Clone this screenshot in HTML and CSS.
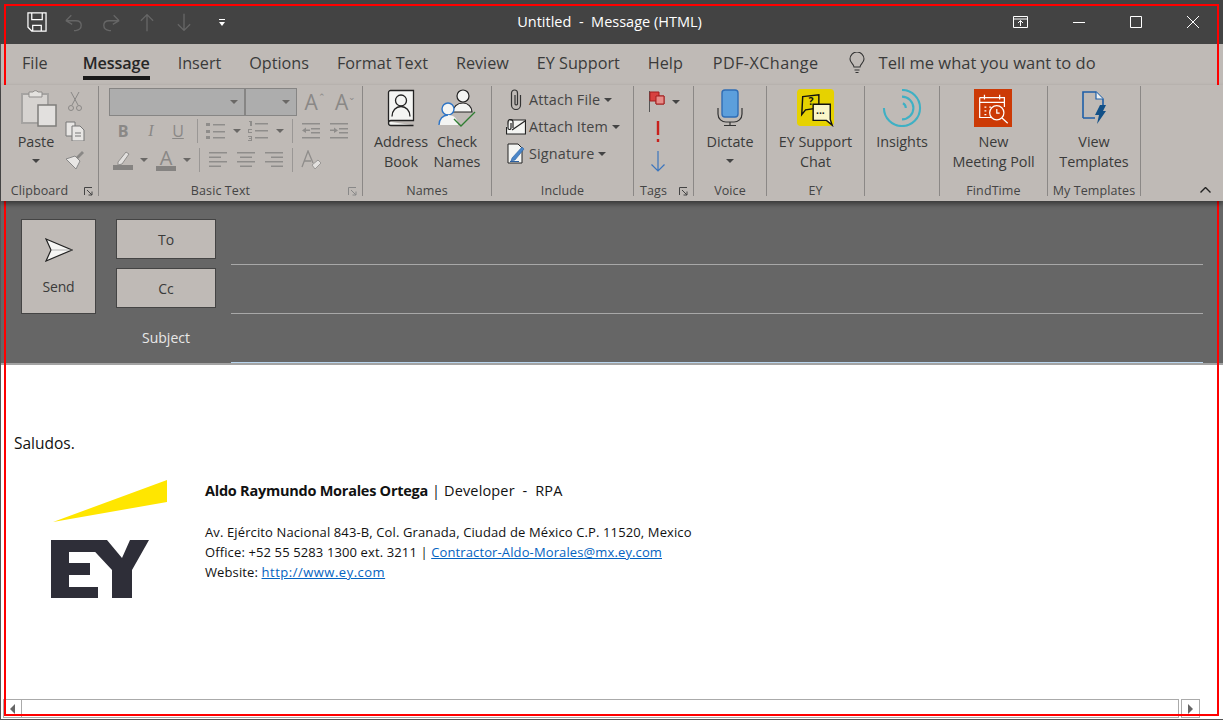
FILE: index.html
```html
<!DOCTYPE html>
<html lang="en">
<head>
<meta charset="UTF-8">
<title>Untitled - Message (HTML)</title>
<link rel="stylesheet" href="styles.css">
</head>
<body>
<div class="window">

  <!-- title bar -->
  <div class="titlebar">
    <div class="qat">
      <svg class="qat-save" width="20" height="20" viewBox="0 0 21 21" fill="none" stroke="#fff" stroke-width="1.3"><path d="M1 1h19v19H5l-4-4z"/><path d="M5 1v7h11V1"/><path d="M6 20v-6h9v6"/></svg>
      <svg class="qat-undo" width="18" height="19" viewBox="0 0 20 20" fill="none" stroke="#666" stroke-width="1.5"><path d="M1 8l6-6M1 8l7 4M1 8h11c8 0 8 10 0 11l-2 0"/></svg>
      <svg class="qat-redo" width="18" height="19" viewBox="0 0 20 20" fill="none" stroke="#666" stroke-width="1.5"><path d="M19 8l-6-6M19 8l-7 4M19 8H8c-8 0-8 10 0 11l2 0"/></svg>
      <svg class="qat-up" width="14" height="19" viewBox="0 0 16 20" fill="none" stroke="#666" stroke-width="1.5"><path d="M8 20V1M1 8l7-7 7 7"/></svg>
      <svg class="qat-down" width="14" height="19" viewBox="0 0 16 20" fill="none" stroke="#666" stroke-width="1.5"><path d="M8 0v19M1 12l7 7 7-7"/></svg>
      <svg class="qat-more" width="6" height="7" viewBox="0 0 6 7" fill="#fff"><path d="M0 0h6v1H0zM0 3h6L3 7z"/></svg>
    </div>
    <div class="title">Untitled&nbsp; -&nbsp; Message (HTML)</div>
    <div class="winctl">
      <svg width="16" height="12" viewBox="0 0 16 12" fill="none" stroke="#fff"><path d="M.5.5h14v11H.5zM.5 3h14M7.5 10V4.500M5 7l2.500-2.500L10 7"/></svg>
      <svg class="ctl-min" width="12" height="1" viewBox="0 0 12 1"><path d="M0 0h12v1H0z" fill="#fff"/></svg>
      <svg class="ctl-max" width="12" height="12" viewBox="0 0 12 12" fill="none" stroke="#fff"><path d="M.5.5h11v11H.5z"/></svg>
      <svg class="ctl-close" width="12" height="12" viewBox="0 0 12 12" fill="none" stroke="#fff"><path d="M0 0l12 12M12 0L0 12"/></svg>
    </div>
  </div>

  <!-- tabs -->
  <div class="tabs">
    <span class="tab">File</span>
    <span class="tab tab-active">Message</span>
    <span class="tab">Insert</span>
    <span class="tab">Options</span>
    <span class="tab">Format Text</span>
    <span class="tab">Review</span>
    <span class="tab">EY Support</span>
    <span class="tab">Help</span>
    <span class="tab tab-pdf">PDF-XChange</span>
    <span class="tell">
      <svg width="16" height="22" viewBox="0 0 16 22" fill="none" stroke="#333" stroke-width="1.100"><path d="M5 15c0-3-4-4-4-8a7 7 0 0 1 14 0c0 4-4 5-4 8z"/><path d="M5.500 18h5M6.500 20.500h3"/></svg>
      Tell me what you want to do
    </span>
  </div>

  <!-- ribbon -->
  <div class="ribbon">

    <div class="group group-clipboard">
      <div class="group-body clip-body">
        <div class="big big-paste">
          <svg class="big-icon paste-icon" width="36" height="38" viewBox="0 0 36 38"><path d="M1 5h26v29H1z" fill="#d6d3d0" stroke="#a5a3a1" stroke-width="2"/><path d="M8 3h4a3 3 0 0 1 5 0h4v5H8z" fill="#e4e2df" stroke="#8f8d8b"/><path d="M17 16h18v21H17z" fill="#e2e0de" stroke="#7f7d7b" stroke-width="1.500"/></svg>
          <span>Paste</span>
          <i class="caret caret-big"></i>
        </div>
        <div class="clip-small">
          <svg width="14" height="20" viewBox="0 0 14 20" fill="none" stroke="#8a8886"><path d="M3 0l7 13M11 0L4 13"/><circle cx="3" cy="16" r="2.500"/><circle cx="11" cy="16" r="2.500"/></svg>
          <svg width="20" height="20" viewBox="0 0 20 20" fill="#e8e6e4" stroke="#777"><path d="M1 1h9v14H1z"/><path d="M7 5h8l4 4v11H7z"/><path d="M10 12h6M10 15h6" /></svg>
          <svg width="20" height="20" viewBox="0 0 20 20"><path d="M1 9l9-3 5 5-4 8z" fill="#e8e6e4" stroke="#888"/><path d="M11 7l6-6 2 2-6 6z" fill="#8a8886"/></svg>
        </div>
      </div>
      <div class="group-label label-left">Clipboard<svg class="launcher" width="9" height="9" viewBox="0 0 9 9" fill="none" stroke="#444"><path d="M.5 8V.5H8M3 3l5 5M8 4.500V8H4.500"/></svg></div>
    </div>

    <div class="group group-text">
      <div class="text-rows">
        <div class="text-row text-row1">
          <div class="combo"><i class="caret"></i></div>
          <div class="combo"><i class="caret"></i></div>
          <span class="tool tool-size">A<sup>&#8963;</sup></span>
          <span class="tool tool-size">A<sup>&#8964;</sup></span>
        </div>
        <div class="text-row text-row2">
          <b class="tool">B</b>
          <em class="tool">I</em>
          <u class="tool">U</u>
          <span class="tool"><i class="vsep"></i></span>
          <span class="tool"><svg width="20" height="18" viewBox="0 0 20 18" fill="#8f8d8b"><path d="M0 1h4v3H0zM0 8h4v3H0zM0 14h4v3H0zM7 2h12v1.500H7zM7 9h12v1.500H7zM7 15h12v1.500H7z"/></svg></span>
          <span class="tool"><i class="caret"></i></span>
          <span class="tool"><svg width="20" height="20" viewBox="0 0 20 20" fill="#8f8d8b"><path d="M7 2h13v1.500H7zM7 9h13v1.500H7zM7 16h13v1.500H7zM1 0h3v5H2V1H1zM0 8h4v1H1v2h3v1H0zM0 15h4v5H0v-1h3v-1H1v-1h2v-1H0z"/></svg></span>
          <span class="tool"><i class="caret"></i></span>
          <span class="tool"><i class="vsep"></i></span>
          <span class="tool"><svg width="18" height="16" viewBox="0 0 18 16" fill="#8f8d8b"><path d="M0 0h18v1.500H0zM9 5h9v1.500H9zM9 9h9v1.500H9zM0 14h18v1.500H0zM0 7.500l4-3v2h4v1.500H4v2z"/></svg></span>
          <span class="tool"><svg width="18" height="16" viewBox="0 0 18 16" fill="#8f8d8b"><path d="M0 0h18v1.500H0zM9 5h9v1.500H9zM9 9h9v1.500H9zM0 14h18v1.500H0zM8 7.500l-4-3v2H0v1.500h4v2z"/></svg></span>
        </div>
        <div class="text-row text-row3">
          <span class="tool"><svg width="20" height="20" viewBox="0 0 20 20"><path d="M5 12L13 2l3 2-7 10-4 1z" fill="#e2e0de" stroke="#8f8d8b"/><path d="M0 15h20v5H0z" fill="#858381"/></svg></span>
          <span class="tool"><i class="caret"></i></span>
          <span class="tool tool-color">A</span>
          <span class="tool"><i class="caret"></i></span>
          <span class="tool"><i class="vsep"></i></span>
          <span class="tool"><svg width="18" height="16" viewBox="0 0 18 16" fill="#8f8d8b"><path d="M0 0h18v1.500H0zM0 4.500h12V6H0zM0 9h18v1.500H0zM0 13.500h12V15H0z"/></svg></span>
          <span class="tool"><svg width="18" height="16" viewBox="0 0 18 16" fill="#8f8d8b"><path d="M0 0h18v1.500H0zM3 4.500h12V6H3zM0 9h18v1.500H0zM3 13.500h12V15H3z"/></svg></span>
          <span class="tool"><svg width="18" height="16" viewBox="0 0 18 16" fill="#8f8d8b"><path d="M0 0h18v1.500H0zM6 4.500h12V6H6zM0 9h18v1.500H0zM6 13.500h12V15H6z"/></svg></span>
          <span class="tool"><i class="vsep"></i></span>
          <span class="tool"><svg width="21" height="20" viewBox="0 0 21 20" fill="none"><path d="M1 17L7 1l5 12M3 11h7" stroke="#8f8d8b" stroke-width="1.300"/><path d="M11 15l6-5 3 3-6 6z" fill="#e2e0de" stroke="#9a9896"/></svg></span>
        </div>
      </div>
      <div class="group-label label-left">Basic Text<svg class="launcher launcher-off" width="9" height="9" viewBox="0 0 9 9" fill="none" stroke="#888"><path d="M.5 8V.5H8M3 3l5 5M8 4.500V8H4.500"/></svg></div>
    </div>

    <div class="group group-names">
      <div class="group-body names-body">
        <div class="big big-address">
          <svg class="big-icon" width="28" height="37" viewBox="0 0 28 37"><path d="M1.500 32V3a2 2 0 0 1 2-2h23v30H4a2.500 2.500 0 0 0 0 5h22.500" fill="#f4f5f3" stroke="#222" stroke-width="1.300"/><circle cx="14" cy="11" r="5.500" fill="none" stroke="#222" stroke-width="1.300"/><path d="M5 27c0-6 4-10 9-10s9 4 9 10" fill="none" stroke="#222" stroke-width="1.300"/></svg>
          <span>Address<br>Book</span>
        </div>
        <div class="big big-check">
          <svg class="big-icon" width="38" height="38" viewBox="0 0 38 38"><circle cx="25" cy="7" r="6" fill="#f4f5f3" stroke="#222" stroke-width="1.200"/><path d="M15 23c0-5 4-9 10-9 5 0 9 4 9 9z" fill="#f4f5f3" stroke="#222" stroke-width="1.200"/><path d="M18 23h18l-8 0z" fill="#c7c6c3"/><circle cx="10" cy="20" r="6" fill="#f4f5f3" stroke="#2e75c6" stroke-width="1.400"/><path d="M1 36c0-6 4-10 9-10 6 0 10 4 10 10z" fill="#f4f5f3"/><path d="M1 36c0-6 4-10 9-10" fill="none" stroke="#2e75c6" stroke-width="1.400"/><path d="M16 30l7 7L37 23" fill="none" stroke="#2f7d32" stroke-width="1.400"/></svg>
          <span>Check<br>Names</span>
        </div>
      </div>
      <div class="group-label">Names</div>
    </div>

    <div class="group group-include">
      <div class="include-rows">
        <div class="inc-row">
          <span class="inc-icon"><svg width="12" height="21" viewBox="0 0 12 21" fill="none" stroke="#333" stroke-width="1.200"><path d="M10.500 6v10a4.500 4.500 0 0 1-9 0V4a3 3 0 0 1 6 0v11a1.300 1.300 0 0 1-2.500 0V6"/></svg></span>
          Attach File <i class="caret caret-dark"></i>
        </div>
        <div class="inc-row">
          <span class="inc-icon"><svg width="20" height="16" viewBox="0 0 20 16" fill="none" stroke="#222" stroke-width="1.200"><path d="M4 1h15.500v14H.5V8" fill="#f4f5f3"/><path d="M6 11L19 2"/><path d="M7 9V3a2.500 2.500 0 0 0-5 0v6a1.500 1.500 0 0 0 3 0V4"/></svg></span>
          Attach Item <i class="caret caret-dark"></i>
        </div>
        <div class="inc-row">
          <span class="inc-icon"><svg width="18" height="21" viewBox="0 0 18 21"><path d="M1 1h10l4 4v15H1z" fill="#f4f5f3" stroke="#222"/><path d="M5 15L15 4l2 2L8 17l-4 1z" fill="#4a86c8" stroke="#2b5fa0" stroke-width=".6"/><path d="M3 18.500h9" stroke="#2b5fa0"/></svg></span>
          Signature <i class="caret caret-dark"></i>
        </div>
      </div>
      <div class="group-label">Include</div>
    </div>

    <div class="group group-tags">
      <div class="tags-col">
        <div class="tag-flag">
          <svg width="16" height="21" viewBox="0 0 16 21"><path d="M.5 0v21" stroke="#555"/><path d="M1 1h9v4h5v8H7V10H1z" fill="#d8413f" stroke="#a31f1f"/><path d="M7 5h8v8H7z" fill="#e78c88" stroke="#a31f1f"/></svg>
          <i class="caret caret-dark"></i>
        </div>
        <svg width="4" height="21" viewBox="0 0 4 21" fill="#c8211c"><path d="M.8 0h2.400v14H.8zM.8 18h2.400v3H.8z"/></svg>
        <svg width="14" height="21" viewBox="0 0 14 21" fill="none" stroke="#3b75bd" stroke-width="1.200"><path d="M7 0v20M.5 13.500L7 20l6.500-6.500"/></svg>
      </div>
      <div class="group-label label-left">Tags<svg class="launcher" width="9" height="9" viewBox="0 0 9 9" fill="none" stroke="#444"><path d="M.5 8V.5H8M3 3l5 5M8 4.500V8H4.500"/></svg></div>
    </div>

    <div class="group group-voice">
      <div class="group-body">
        <div class="big">
          <svg class="big-icon" width="26" height="38" viewBox="0 0 26 38"><rect x="5" y="1" width="16" height="27" rx="3" fill="#5c9fdc" stroke="#2f6db5" stroke-width="1.400"/><path d="M1 18v6c0 5 4 8 8 8h8c4 0 8-3 8-8v-6" fill="none" stroke="#333" stroke-width="1.200" transform="translate(0 1)"/><path d="M13 33v3M7 36.500h12" stroke="#333" stroke-width="1.200"/></svg>
          <span>Dictate</span>
          <i class="caret caret-big"></i>
        </div>
      </div>
      <div class="group-label">Voice</div>
    </div>

    <div class="group group-ey">
      <div class="group-body">
        <div class="big">
          <svg class="big-icon" width="40" height="40" viewBox="0 0 40 40"><rect width="39" height="39" rx="4" fill="#e6d200"/><path d="M6 8l17-2 0 14-14 2-4 5z" fill="#e6d200" stroke="#111" stroke-width="1.500"/><path d="M17 16h18v16l2 6-6-5H17z" fill="#faf6c8" stroke="#111" stroke-width="1.500"/><text x="12" y="17" class="chat-q">?</text><text x="20" y="26" class="chat-q">...</text></svg>
          <span>EY Support<br>Chat</span>
        </div>
      </div>
      <div class="group-label">EY</div>
    </div>

    <div class="group group-insights">
      <div class="group-body">
        <div class="big">
          <svg class="big-icon" width="40" height="40" viewBox="0 0 40 40" fill="none" stroke="#3fb0c4" stroke-width="2.200"><path d="M20 1a19 19 0 1 1-19 19"/><path d="M20 8a12 12 0 0 1 0 24"/><path d="M21 15a6 6 0 0 1 3 5"/></svg>
          <span>Insights</span>
        </div>
      </div>
      <div class="group-label"></div>
    </div>

    <div class="group group-find">
      <div class="group-body">
        <div class="big">
          <svg class="big-icon" width="40" height="40" viewBox="0 0 40 40"><rect width="40" height="40" fill="#cc3a06"/><path d="M6 9h26v10M6 9v21h12M6 14h26M11 6v5M27 6v5M11 19h2M11 23h2M11 27h2M16 19h2" fill="none" stroke="#fff" stroke-width="1.300"/><circle cx="24" cy="25" r="7.500" fill="#cc3a06" stroke="#fff" stroke-width="1.300"/><path d="M24 21v4.500h3M29.500 30.500l6 5.500" fill="none" stroke="#fff" stroke-width="1.300"/></svg>
          <span>New<br>Meeting Poll</span>
        </div>
      </div>
      <div class="group-label">FindTime</div>
    </div>

    <div class="group group-tpl">
      <div class="group-body">
        <div class="big">
          <svg class="big-icon" width="24" height="34" viewBox="0 0 24 34"><path d="M1 27V1h13l7 7v8M1 27h12" fill="none" stroke="#1f5fa8" stroke-width="1.600"/><path d="M14 1v7h7" fill="#f0f0ee" stroke="#1f5fa8" stroke-width="1.200"/><path d="M18 14l6 0-3 6h3l-9 13 2-9h-4z" fill="#125087"/></svg>
          <span>View<br>Templates</span>
        </div>
      </div>
      <div class="group-label">My Templates</div>
    </div>

    <svg class="collapse" width="11" height="6" viewBox="0 0 11 6" fill="none" stroke="#222" stroke-width="1.400"><path d="M.5 5.500l5-5 5 5"/></svg>
  </div>

  <!-- address fields -->
  <div class="compose">
    <div class="send">
      <svg width="28" height="24" viewBox="0 0 28 24"><path d="M1 1l26 11L1 23l5-11z" fill="#f6f6f4" stroke="#222" stroke-width="1.200"/><path d="M6 12h21" stroke="#888" stroke-width=".6"/></svg>
      <span>Send</span>
    </div>
    <div class="fields">
      <div class="field"><span class="field-btn">To</span><span class="field-line"></span></div>
      <div class="field"><span class="field-btn">Cc</span><span class="field-line"></span></div>
      <div class="field"><span class="field-name">Subject</span><span class="field-line field-line-focus"></span></div>
    </div>
  </div>

  <!-- message body -->
  <div class="mail">
    <p class="greet">Saludos.</p>
    <div class="sig">
      <svg class="logo" width="118" height="120" viewBox="0 0 118 120">
        <path d="M3 42L117 0v22z" fill="#ffe600"/>
        <path d="M1 60h46l7 12H19v11h21v12H19v12h29v11H1z" fill="#2e2e38"/>
        <path d="M34 60h23l15 18 8-18h19L82 90v28H62V90z" fill="#2e2e38"/>
      </svg>
      <div class="sig-text">
        <p class="sig-name"><b>Aldo Raymundo Morales Ortega</b> | Developer&nbsp; -&nbsp; RPA</p>
        <p>Av. Ejército Nacional 843-B, Col. Granada, Ciudad de México C.P. 11520, Mexico</p>
        <p>Office: +52 55 5283 1300 ext. 3211 | <a href="#">Contractor-Aldo-Morales@mx.ey.com</a></p>
        <p>Website: <a class="site" href="#">http://www.ey.com</a></p>
      </div>
    </div>
  </div>

  <!-- horizontal scrollbar -->
  <div class="hscroll">
    <span class="sb-btn"><i class="sb-left"></i></span>
    <span class="sb-track"></span>
    <span class="sb-btn"><i class="sb-right"></i></span>
  </div>

  <div class="redframe"></div>
</div>
</body>
</html>
```
FILE: styles.css
```css
* { box-sizing: border-box; }

html, body {
  margin: 0;
  height: 100%;
  overflow: hidden;
}

body {
  font-family: "Open Sans", "Noto Sans", sans-serif;
  color: #3a3a3a;
}

p { margin: 0; }

/* window */
.window {
  position: relative;
  width: 1223px;
  height: 720px;
  display: flex;
  flex-direction: column;
  background: #fff;
  border-left: 1px solid #555;
  border-bottom: 1px solid #555;
}

.redframe {
  position: absolute;
  left: 3px;
  top: 4px;
  width: 1215px;
  height: 712px;
  border: 2px solid #f00;
  pointer-events: none;
}

/* title bar */
.titlebar {
  height: 44px;
  margin-left: -1px;
  background: #434343;
  display: grid;
  grid-template-columns: 1fr auto 1fr;
  align-items: center;
  color: #fff;
  flex: none;
}

.qat {
  display: flex;
  align-items: center;
  padding: 0 0 0 27px;
}

.qat svg { flex: none; }
.qat-undo { margin-left: 18px; }
.qat-redo { margin-left: 19px; }
.qat-up { margin-left: 20px; }
.qat-down { margin-left: 23px; }
.qat-more { margin-left: 28px; }

.title {
  font-size: 14.500px;
  padding-bottom: 1px;
  transform: translateX(-2px);
}

.winctl {
  display: flex;
  justify-content: flex-end;
  align-items: center;
  padding-right: 24px;
}

.ctl-min { margin-left: 44px; }
.ctl-max { margin-left: 45px; }
.ctl-close { margin-left: 45px; }

/* tabs */
.tabs {
  height: 41px;
  flex: none;
  background: #bfbab6;
  display: flex;
  align-items: flex-start;
  padding: 8px 0 0 21px;
  font-size: 16.200px;
  color: #3a3a3a;
  white-space: nowrap;
}

.tab {
  margin-right: 28px;
  height: 28px;
  line-height: 22px;
}

.tab:first-child { margin-right: 35px; }

.tab-active {
  color: #262626;
  font-weight: 600;
  border-bottom: 4px solid #1a1a1a;
  letter-spacing: -0.1px;
}

.tab-pdf {
  letter-spacing: 0.4px;
  margin-left: 2px;
}

.tell {
  display: flex;
  align-items: center;
  gap: 14px;
  height: 21px;
  font-size: 16.500px;
  margin-left: 2px;
}

/* ribbon */
.ribbon {
  position: relative;
  height: 116px;
  flex: none;
  background: #bfbab6;
  display: flex;
  font-size: 14.400px;
  line-height: 20px;
  box-shadow: 0 3px 5px rgba(0, 0, 0, 0.45);
  z-index: 1;
  letter-spacing: -0.05px;
}

.group {
  position: relative;
  display: flex;
  flex-direction: column;
  height: 110px;
  border-right: 1px solid #8b8886;
  margin-top: 1px;
  flex: none;
}

.group-clipboard { width: 98px; }
.group-text { width: 264px; }
.group-names { width: 129px; }
.group-include { width: 142px; }
.group-tags { width: 60px; }
.group-voice { width: 73px; }
.group-ey { width: 98px; }
.group-insights { width: 75px; }
.group-find { width: 108px; }
.group-tpl { width: 93px; }

.group-body {
  flex: 1;
  display: flex;
  justify-content: center;
  min-height: 0;
}

.group-label {
  position: relative;
  height: 20px;
  margin-bottom: -6px;
  line-height: 18px;
  font-size: 12.500px;
  letter-spacing: 0.1px;
  text-align: center;
  white-space: nowrap;
  flex: none;
  color: #444;
}

.label-left { padding-right: 20px; }

.launcher {
  position: absolute;
  right: 5px;
  top: 5px;
}

.big {
  display: flex;
  flex-direction: column;
  align-items: center;
  text-align: center;
  padding-top: 3px;
  white-space: nowrap;
}

.big-icon {
  height: 38px;
  flex: none;
  margin-bottom: 5px;
}

.big span { display: block; }

/* carets */
.caret {
  display: inline-block;
  width: 0;
  height: 0;
  border-left: 4px solid transparent;
  border-right: 4px solid transparent;
  border-top: 4px solid #6a6866;
}

.caret-dark { border-top-color: #444; margin-left: 1px; vertical-align: 3px; }
.caret-big { border-top-color: #444; margin-top: 7px; }

/* clipboard */
.clip-body {
  justify-content: flex-start;
  padding-left: 12px;
}

.big-paste { width: 46px; }
.paste-icon { margin-left: 5px; }

.clip-small {
  display: flex;
  flex-direction: column;
  align-items: center;
  gap: 9px;
  width: 20px;
  margin-left: 6px;
  padding-top: 6px;
}

/* names */
.names-body {
  justify-content: flex-start;
  padding-left: 9px;
}

.big-address { width: 58px; }
.big-check { width: 54px; }

/* basic text */
.text-rows {
  flex: 1;
  padding: 2px 0 0 10px;
  display: flex;
  flex-direction: column;
}

.text-row {
  display: grid;
  align-items: center;
  justify-items: center;
  height: 29px;
}

.text-row1 {
  grid-template-columns: 136px 52px 36px 25px;
  height: 28px;
}

.text-row2 { grid-template-columns: 28px 28px 26px 12px 26px 16px 26px 18px 6px 32px 24px; }
.text-row3 { grid-template-columns: 28px 14px 30px 12px 12px 26px 30px 26px 10px 28px; }

.combo {
  width: 100%;
  height: 28px;
  background: #adadad;
  border: 1px solid #868584;
  display: flex;
  align-items: center;
  justify-content: flex-end;
  padding-right: 6px;
}

.tool {
  display: flex;
  align-items: center;
  justify-content: center;
  color: #8a8886;
  font-size: 16px;
  font-style: normal;
  line-height: 20px;
}

b.tool { font-weight: 700; }
em.tool { font-style: italic; font-family: "Liberation Serif", serif; }

.tool-size { font-size: 21px; align-items: flex-start; }
.tool-size sup { font-size: 9px; line-height: 10px; }

.tool-color {
  font-size: 20px;
  border-bottom: 5px solid #858381;
  line-height: 17px;
  width: 20px;
  justify-self: center;
}

.vsep {
  display: block;
  width: 1px;
  height: 24px;
  background: #9a9795;
}

/* include */
.include-rows {
  flex: 1;
}

.inc-row {
  display: flex;
  align-items: center;
  gap: 3px;
  height: 27px;
  white-space: nowrap;
  color: #444;
  letter-spacing: 0.15px;
}

.inc-icon {
  width: 34px;
  padding-left: 14px;
  display: flex;
  justify-content: center;
  flex: none;
}

/* tags */
.tags-col {
  flex: 1;
  display: flex;
  flex-direction: column;
  align-items: center;
  gap: 9px;
  padding-top: 5px;
  padding-right: 12px;
}

.tag-flag {
  display: flex;
  align-items: center;
  gap: 6px;
  margin-left: 14px;
}

.tag-flag .caret { vertical-align: 0; }

.chat-q {
  font-size: 11px;
  font-weight: 700;
  fill: #111;
}

.collapse {
  position: absolute;
  left: 1199px;
  top: 102px;
}

/* compose */
.compose {
  height: 164px;
  flex: none;
  background: #666;
  border-bottom: 2px solid #a3a3a3;
  display: flex;
  align-items: flex-start;
  padding: 18px 0 0 20px;
}

.send {
  width: 75px;
  height: 95px;
  background: #bfbab6;
  border: 1px solid #444;
  display: flex;
  flex-direction: column;
  align-items: center;
  padding-top: 18px;
  gap: 15px;
  font-size: 14px;
  line-height: 20px;
  letter-spacing: -0.2px;
  flex: none;
}

.fields {
  margin-left: 20px;
  width: 1087px;
}

.field {
  height: 49px;
  display: flex;
  align-items: flex-start;
}

.field-btn {
  width: 100px;
  height: 40px;
  background: #bfbab6;
  border: 1px solid #444;
  display: flex;
  align-items: center;
  justify-content: center;
  font-size: 14px;
  flex: none;
}

.field-name {
  width: 100px;
  padding-top: 11px;
  color: #e8e8e8;
  font-size: 14px;
  line-height: 20px;
  text-align: center;
  flex: none;
}

.field-line {
  flex: 1;
  margin: 45px 0 0 15px;
  height: 1px;
  background: #a8a8a8;
}

.field-line-focus {
  background: #b9d5ee;
}

/* mail body */
.mail {
  flex: 1;
  padding: 68px 0 0 13px;
  color: #111;
  min-height: 0;
}

.greet {
  font-size: 15.500px;
  line-height: 20px;
}

.sig {
  display: flex;
  margin-top: 27px;
}

.logo {
  margin-left: 36px;
  flex: none;
}

.sig-text {
  margin-left: 37px;
  padding-top: 1px;
  font-size: 13px;
  line-height: 20px;
  letter-spacing: 0.12px;
}

.sig-name {
  font-size: 14.500px;
  line-height: 20px;
  margin-bottom: 21px;
  letter-spacing: 0.15px;
}

.sig-name b { letter-spacing: -0.25px; }

.sig-text a { color: #0563c1; }
.sig-text .site { letter-spacing: 0.5px; }

/* scrollbar */
.hscroll {
  height: 19px;
  flex: none;
  margin: 0 23px 1px 2px;
  display: flex;
}

.sb-btn {
  width: 19px;
  border: 1px solid #aaa;
  background: #fff;
  display: flex;
  align-items: center;
  justify-content: center;
  flex: none;
}

.sb-track {
  flex: 1;
  margin-right: 2px;
  border: 1px solid #aaa;
  border-left: 0;
}

.sb-left, .sb-right {
  width: 0;
  height: 0;
  border-top: 5px solid transparent;
  border-bottom: 5px solid transparent;
}

.sb-left { border-right: 5px solid #666; }
.sb-right { border-left: 5px solid #666; }
```
